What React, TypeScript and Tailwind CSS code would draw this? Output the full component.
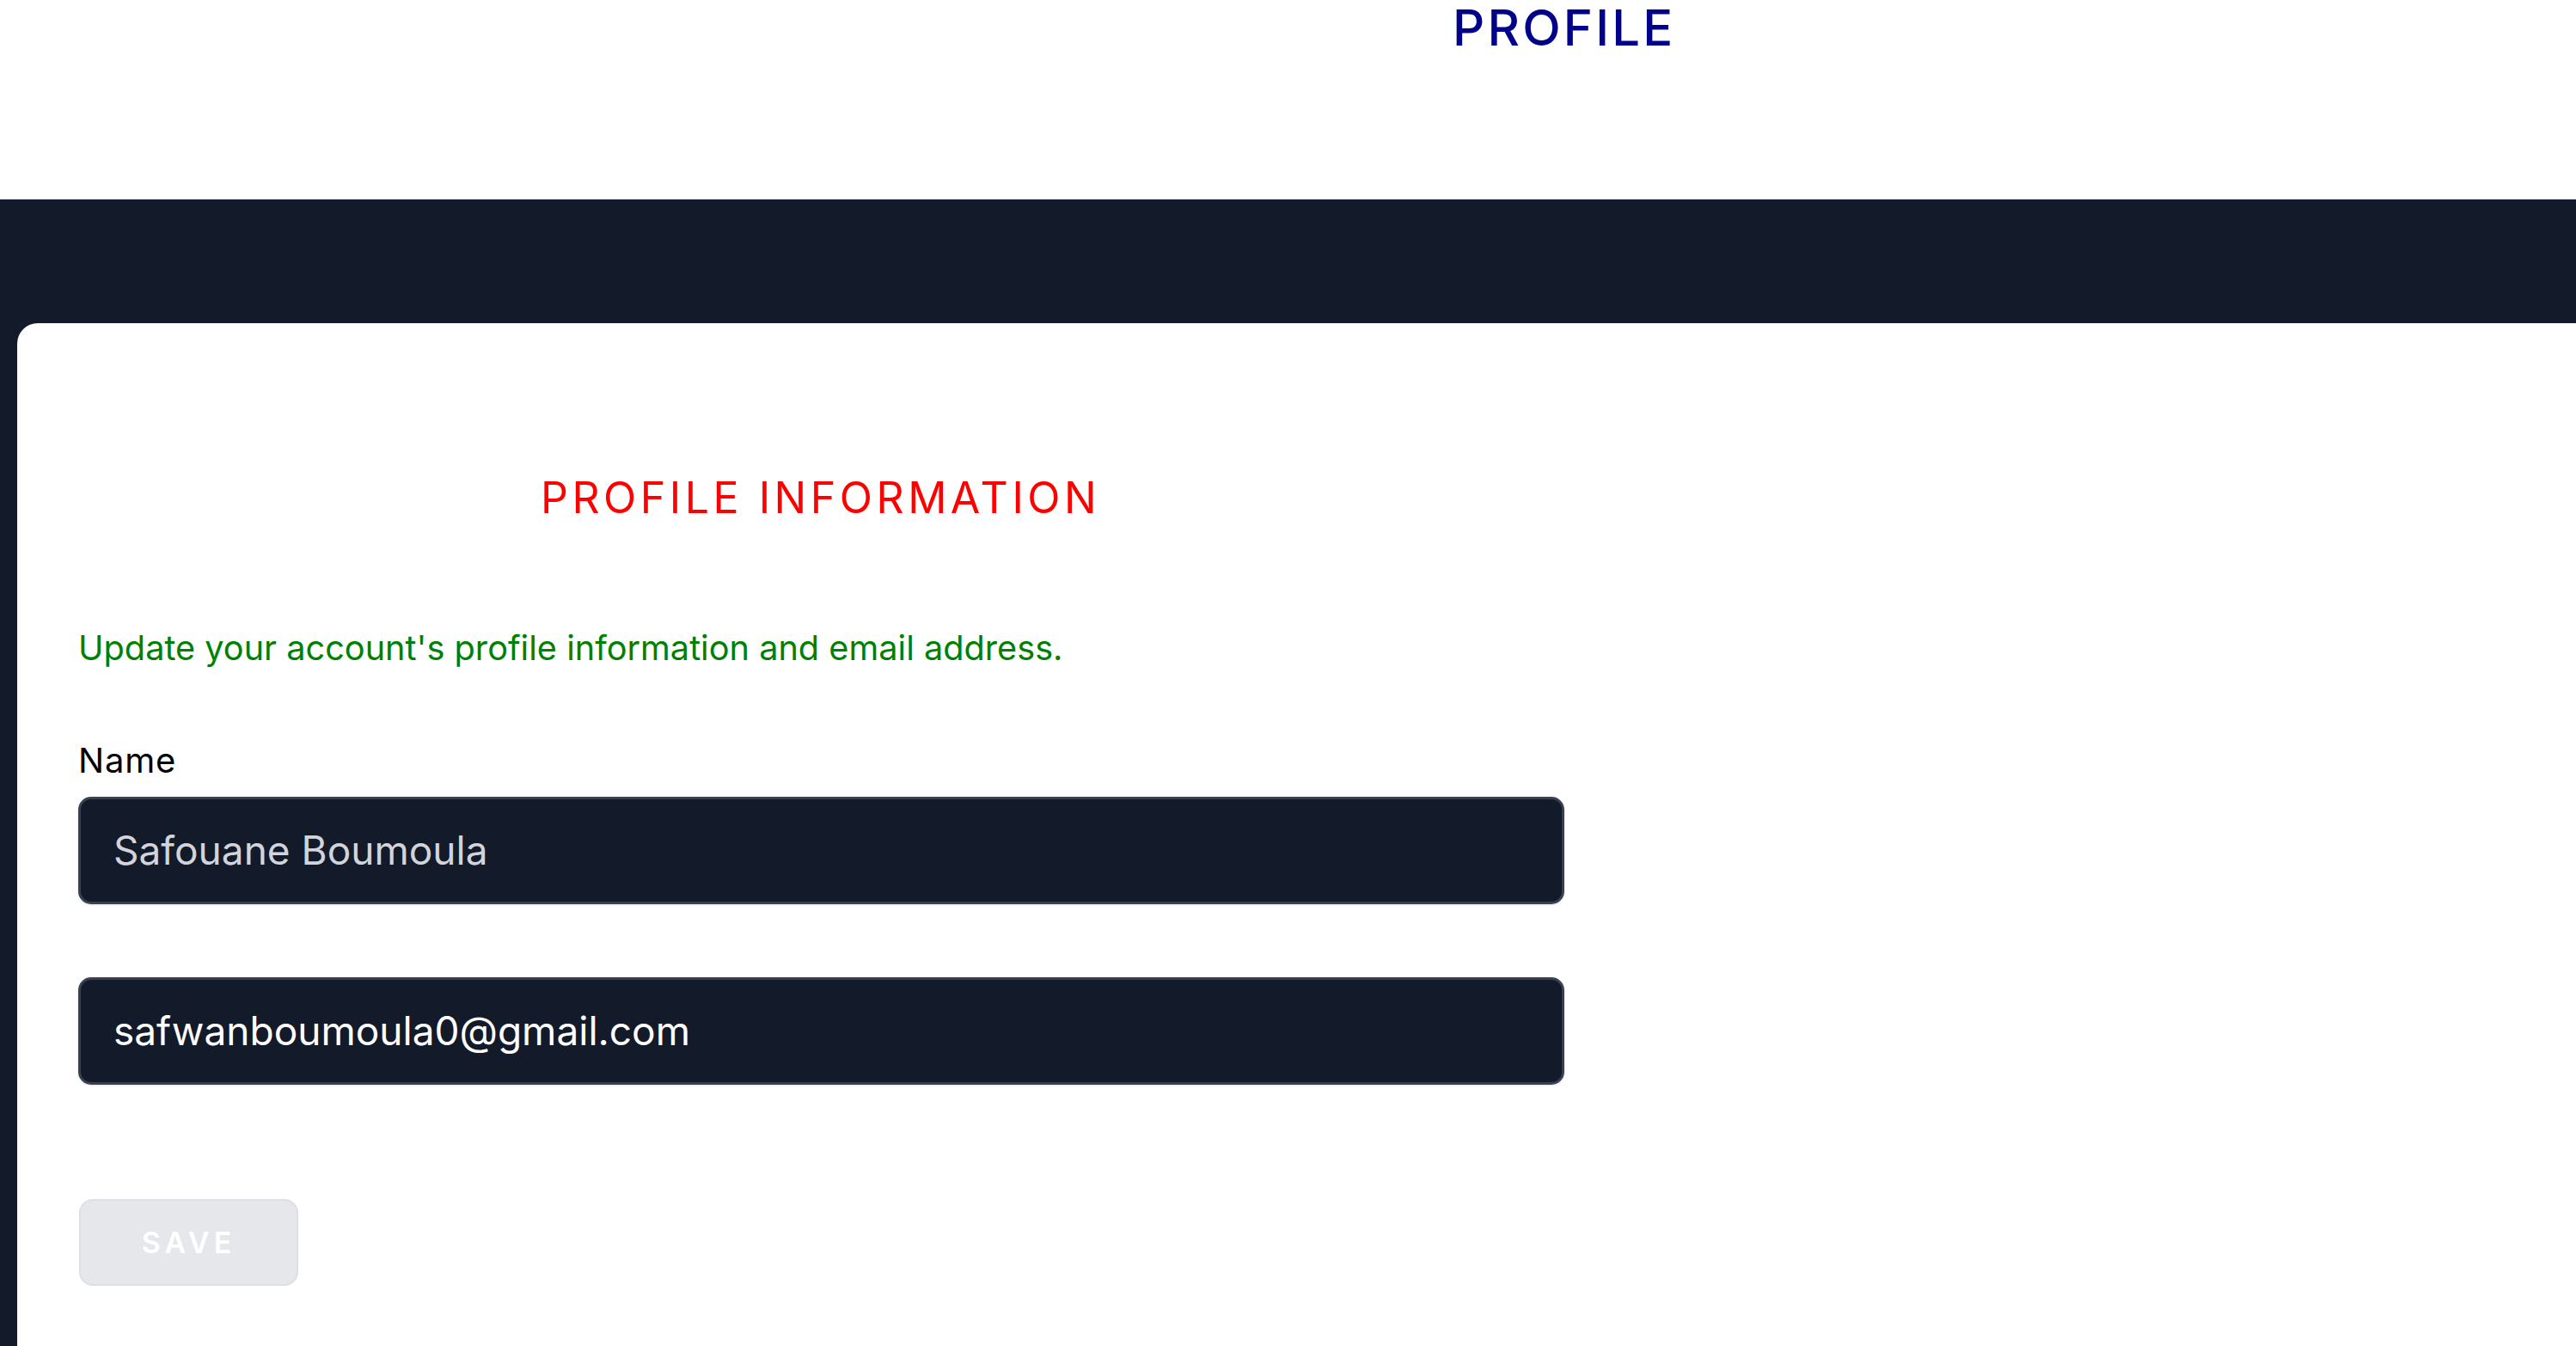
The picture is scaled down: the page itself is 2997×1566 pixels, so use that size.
const font = { fontFamily: 'Inter, "Noto Sans", sans-serif' };

export default function App() {
  return (
    <div className="min-h-screen w-full bg-white" style={font}>
      <header className="h-[232px] bg-white pt-[3px] pl-[1690px]">
        <h1 className="text-[58px] leading-none font-medium tracking-[0.055em] text-[#00008b]">PROFILE</h1>
      </header>

      <div className="bg-[#131a29] pt-[144px]">
        <section className="ml-[20px] h-[1190px] rounded-tl-[24px] bg-white pt-[178px] pl-[71px]">
          <h2 className="pl-[538px] text-[50px] leading-none tracking-[0.09em] text-[#ff0000]">
            PROFILE INFORMATION
          </h2>

          <p className="mt-[131px] text-[39.7px] leading-none text-[#008000]">
            Update your account's profile information and email address.
          </p>

          <form className="flex flex-col">
            <label htmlFor="name" className="mt-[90px] text-[40px] leading-none tracking-[0.02em] text-black">
              Name
            </label>
            <input
              id="name"
              type="text"
              defaultValue="Safouane Boumoula"
              className="mt-[22px] h-[125px] w-[1729px] rounded-[15px] border-[3px] border-[#374151] bg-[#131a29] pl-[38px] text-[46px] text-[#d1d5db] shadow-sm outline-none"
            />

            <input
              id="email"
              type="email"
              defaultValue="safwanboumoula0@gmail.com"
              className="mt-[85px] h-[125px] w-[1729px] rounded-[15px] border-[3px] border-[#374151] bg-[#131a29] pl-[38px] text-[46px] text-white shadow-sm outline-none"
            />

            <div className="mt-[133px] pl-[1px]">
              <button
                type="button"
                disabled
                className="h-[101px] w-[255px] rounded-[16px] border-[2px] border-[#dcdfe4] bg-[#e5e7eb] text-[34px] font-semibold tracking-[0.15em] text-white"
              >
                SAVE
              </button>
            </div>
          </form>
        </section>
      </div>
    </div>
  );
}
